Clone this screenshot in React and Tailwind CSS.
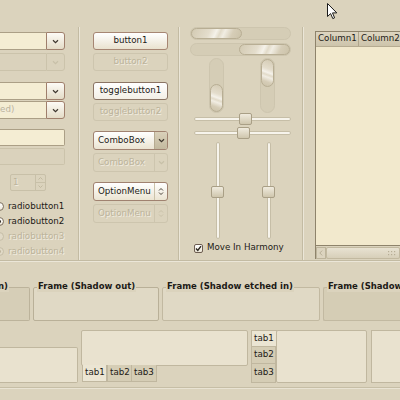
import React from "react";

const dis = "text-[#bbb39b] [text-shadow:1px_1px_0_#f1ece0]";

function Chevron({ color = "#3d362e" }) {
  return (
    <svg width="7" height="5" viewBox="0 0 7 5">
      <path d="M1 1.2 L3.5 3.6 L6 1.2" fill="none" stroke={color} strokeWidth="1.2" />
    </svg>
  );
}

function UpDown({ color = "#3d362e" }) {
  return (
    <svg width="6" height="9" viewBox="0 0 6 9">
      <path d="M1 3.5 L3 1.5 L5 3.5 M1 5.5 L3 7.5 L5 5.5" fill="none" stroke={color} strokeWidth="1" />
    </svg>
  );
}

function ComboEntry({ disabled, children }) {
  return (
    <div className="flex h-[18px] w-[65px]">
      <div
        className={
          "flex-1 overflow-hidden border-y flex items-center " +
          (disabled ? "border-[#cbc3ab] bg-[#dad2bc]" : "border-[#ab9f86] bg-[#f4edd3]")
        }
      >
        {children}
      </div>
      <div
        className={
          "w-[19px] rounded-r-[3px] border flex items-center justify-center " +
          (disabled
            ? "border-[#cbc3ab] bg-[#dad2bc]"
            : "border-[#9f7f6c] bg-gradient-to-b from-[#fdfbf6] to-[#e4dcc7]")
        }
      >
        <Chevron color={disabled ? "#c8c0a8" : "#3d362e"} />
      </div>
    </div>
  );
}

function Button({ children, disabled, toggled }) {
  return (
    <div
      className={
        "w-[75px] h-[18px] rounded-[3px] border flex items-center justify-center text-[8.7px] " +
        (disabled
          ? "border-[#cdc5ae] bg-[#dbd3bd] " + dis
          : toggled
          ? "border-[#8a7464] bg-gradient-to-b from-white to-[#f3efe6] text-[#1c1a16]"
          : "border-[#a68673] bg-gradient-to-b from-white to-[#e9e2cf] text-[#1c1a16]")
      }
    >
      {children}
    </div>
  );
}

function Combo({ children, disabled, option }) {
  return (
    <div
      className={
        "w-[75px] h-[19px] rounded-[3px] border flex text-[8.7px] overflow-hidden " +
        (disabled ? "border-[#cdc5ae] bg-[#dbd3bd]" : "border-[#a08270] bg-gradient-to-b from-white to-[#ebe4d2]")
      }
    >
      <div className={"flex-1 flex items-center pl-[4px] " + (disabled ? dis : "text-[#1c1a16]")}>{children}</div>
      <div
        className={
          "w-[13px] flex items-center justify-center border-l " +
          (disabled
            ? "border-[#cdc5ae]"
            : option
            ? "border-[#cbc2aa]"
            : "border-[#b6ab91] bg-gradient-to-b from-[#d9d0b9] to-[#c3b99f]")
        }
      >
        {option ? (
          <UpDown color={disabled ? "#c8c0a8" : "#4a4238"} />
        ) : (
          <Chevron color={disabled ? "#c8c0a8" : "#3d362e"} />
        )}
      </div>
    </div>
  );
}

function Radio({ checked, disabled, label }) {
  return (
    <div className="flex items-center h-[15px]">
      <div
        className={
          "ml-[-5px] w-[9px] h-[9px] rounded-full border flex items-center justify-center " +
          (disabled ? "border-[#c6bea7] bg-[#e0d9c6]" : "border-[#7d7060] bg-gradient-to-b from-white to-[#ece6d6]")
        }
      >
        {checked && <div className={"w-[3px] h-[3px] rounded-full " + (disabled ? "bg-[#bbb39b]" : "bg-[#2b2620]")} />}
      </div>
      <div className={"ml-[4px] text-[8.7px] leading-[15px] " + (disabled ? dis : "text-[#1c1a16]")}>{label}</div>
    </div>
  );
}

const thumbH =
  "bg-[linear-gradient(115deg,#d3cab3_0%,#e4ddcc_35%,#f5f2ea_48%,#e2dbc9_56%,#f1ede3_64%,#d6cdb7_80%,#cbc2a9_100%)]";
const thumbV =
  "bg-[linear-gradient(200deg,#d3cab3_0%,#e4ddcc_35%,#f5f2ea_48%,#e2dbc9_56%,#f1ede3_64%,#d6cdb7_80%,#cbc2a9_100%)]";

function HScroll({ right }) {
  return (
    <div className={"w-[101px] h-[13px] rounded-full bg-[#d5cdb6] border border-[#cdc5ae] flex " + (right ? "justify-end" : "justify-start")}>
      <div className={"w-[51px] h-full rounded-full border border-[#b8ae94] " + thumbH} />
    </div>
  );
}

function VScroll({ bottom }) {
  return (
    <div className={"w-[15px] h-[55px] rounded-full bg-[#d5cdb6] border border-[#cdc5ae] flex flex-col " + (bottom ? "justify-end" : "justify-start")}>
      <div className={"h-[28px] w-full rounded-full border border-[#b8ae94] " + thumbV} />
    </div>
  );
}

const handle =
  "w-[13px] h-[12px] rounded-[2px] border border-[#a99f86] bg-gradient-to-b from-[#f0ebde] to-[#cfc6ad]";

function HSlider({ pos }) {
  return (
    <div className="relative w-[97px] h-[12px] ml-[4px] flex items-center">
      <div className="w-full h-[4px] rounded-full bg-[#f7f4ec] border border-[#c6bea7]" />
      <div className={"absolute top-0 " + handle} style={{ left: pos }} />
    </div>
  );
}

function VSlider() {
  return (
    <div className="relative w-[13px] h-[97px] flex justify-center">
      <div className="h-full w-[4px] rounded-full bg-[#f7f4ec] border border-[#c6bea7]" />
      <div className={"absolute left-0 top-[44px] " + handle} />
    </div>
  );
}

function Frame({ label, className, labelClass = "left-[3px]" }) {
  return (
    <div className={"relative h-[34px] rounded-[2px] border " + className}>
      <div className={"absolute top-[-7px] whitespace-nowrap px-[1px] bg-[#dbd3bd] text-[8.5px] leading-[11px] font-bold text-[#1c1a16] " + labelClass}>
        {label}
      </div>
    </div>
  );
}

function Tab({ children, active, className = "" }) {
  return (
    <div
      className={
        "flex items-center text-[8.7px] text-[#1c1a16] px-[2px] " +
        (active ? "bg-[#ebe5d3] " : "bg-[#d5cdb5] border border-[#c0b79f] ") +
        className
      }
    >
      {children}
    </div>
  );
}

const vsep = "mt-[27px] h-[233px] w-[2px] border-l border-[#c3bba3] bg-[#ebe6d8]";

export default function App() {
  return (
    <div className="relative w-[400px] h-[400px] overflow-hidden bg-[#dbd3bd] text-[#1c1a16] font-['DejaVu_Sans',sans-serif]">
      {/* top section */}
      <div className="flex h-[260px]">
        {/* col1 */}
        <div className="w-[78px] shrink-0 flex flex-col">
          <div className="mt-[32px]">
            <ComboEntry />
          </div>
          <div className="mt-[3px]">
            <ComboEntry disabled />
          </div>
          <div className="mt-[11px]">
            <ComboEntry />
          </div>
          <div className="mt-[1px]">
            <ComboEntry>
              <span className={"ml-[-29px] text-[8.7px] whitespace-nowrap " + dis}>(disabled)</span>
            </ComboEntry>
          </div>
          <div className="mt-[10px] w-[65px] h-[17px] border-y border-r rounded-r-[2px] border-[#ab9f86] bg-[#f4edd3]" />
          <div className="mt-[2px] w-[65px] h-[17px] border-y border-r rounded-r-[2px] border-[#cbc3ab] bg-[#dad2bc]" />
          <div className="mt-[9px] ml-[10px] w-[36px] h-[17px] flex border border-[#c8c0a8] rounded-[2px]">
            <div className={"flex-1 flex items-center pl-[2px] text-[8.7px] " + dis}>1</div>
            <div className="w-[10px] border-l border-[#c8c0a8] flex flex-col">
              <div className="flex-1 flex items-center justify-center border-b border-[#c8c0a8]">
                <svg width="5" height="3" viewBox="0 0 5 3"><path d="M0.5 2.5 L2.5 0.5 L4.5 2.5" fill="none" stroke="#bdb59d" strokeWidth="0.9" /></svg>
              </div>
              <div className="flex-1 flex items-center justify-center">
                <svg width="5" height="3" viewBox="0 0 5 3"><path d="M0.5 0.5 L2.5 2.5 L4.5 0.5" fill="none" stroke="#bdb59d" strokeWidth="0.9" /></svg>
              </div>
            </div>
          </div>
          <div className="mt-[8px] flex flex-col">
            <Radio label="radiobutton1" />
            <Radio label="radiobutton2" checked />
            <Radio label="radiobutton3" disabled />
            <Radio label="radiobutton4" disabled checked />
          </div>
        </div>
        <div className={vsep} />
        {/* col2 */}
        <div className="w-[98px] shrink-0 pl-[13px] flex flex-col">
          <div className="mt-[32px]"><Button>button1</Button></div>
          <div className="mt-[3px]"><Button disabled>button2</Button></div>
          <div className="mt-[11px]"><Button toggled>togglebutton1</Button></div>
          <div className="mt-[3px]"><Button disabled>togglebutton2</Button></div>
          <div className="mt-[10px]"><Combo>ComboBox</Combo></div>
          <div className="mt-[3px]"><Combo disabled>ComboBox</Combo></div>
          <div className="mt-[10px]"><Combo option>OptionMenu</Combo></div>
          <div className="mt-[3px]"><Combo option disabled>OptionMenu</Combo></div>
        </div>
        <div className={vsep} />
        {/* col3 */}
        <div className="w-[122px] shrink-0 pl-[10px] flex flex-col">
          <div className="mt-[27px]"><HScroll /></div>
          <div className="mt-[3px]"><HScroll right /></div>
          <div className="mt-[2px] flex pl-[19px] gap-[36px]">
            <VScroll bottom />
            <VScroll />
          </div>
          <div className="mt-[0px]"><HSlider pos={45} /></div>
          <div className="mt-[2px]"><HSlider pos={43} /></div>
          <div className="mt-[3px] flex pl-[21px] gap-[38px]">
            <VSlider />
            <VSlider />
          </div>
          <div className="mt-[3px] flex items-center h-[12px] pl-[4px]">
            <div className="w-[9px] h-[9px] rounded-[2px] border border-[#6e5e52] bg-gradient-to-b from-white to-[#ece6d6] flex items-center justify-center">
              <svg width="7" height="7" viewBox="0 0 7 7"><path d="M1 3.6 L2.8 5.4 L6 1.2" fill="none" stroke="#2b2620" strokeWidth="1.4" /></svg>
            </div>
            <span className="ml-[4px] text-[8.7px]">Move In Harmony</span>
          </div>
        </div>
        <div className={vsep} />
        {/* col4 */}
        <div className="flex-1 pl-[11px] flex flex-col">
          <div className="mt-[31px] h-[228px] border-l border-t border-[#8e836b] flex flex-col">
            <div className="h-[15px] flex bg-gradient-to-b from-[#ddd5c0] to-[#cdc4ab] border-b border-[#b5ab91] text-[8.7px]">
              <div className="w-[43px] pl-[2px] flex items-center border-r border-[#b0a68c]">Column1</div>
              <div className="pl-[2px] flex items-center whitespace-nowrap">Column2</div>
            </div>
            <div className="flex-1 bg-[#f2e9cd] border-b border-[#8e836b]" />
            <div className="h-[12px] flex bg-[#d6ceb7] mt-[1px]">
              <div className="w-[10px] border border-[#bdb49b] bg-[#dcd4bf] flex items-center justify-center">
                <svg width="4" height="6" viewBox="0 0 4 6"><path d="M3.2 0.6 L0.8 3 L3.2 5.4" fill="none" stroke="#b3aa92" strokeWidth="0.9" /></svg>
              </div>
              <div className="flex-1 rounded-[2px] border border-[#c2b9a0] bg-gradient-to-b from-[#e8e2d2] to-[#d7cfb9] flex items-center justify-end pr-[3px]">
                <svg width="8" height="5" viewBox="0 0 8 5">
                  <rect x="0" y="0" width="1.2" height="1.2" fill="#b7ae96" />
                  <rect x="3" y="0" width="1.2" height="1.2" fill="#b7ae96" />
                  <rect x="6" y="0" width="1.2" height="1.2" fill="#b7ae96" />
                  <rect x="0" y="3" width="1.2" height="1.2" fill="#b7ae96" />
                  <rect x="3" y="3" width="1.2" height="1.2" fill="#b7ae96" />
                  <rect x="6" y="3" width="1.2" height="1.2" fill="#b7ae96" />
                </svg>
              </div>
            </div>
          </div>
        </div>
      </div>
      {/* horizontal separator under top section */}
      <div className="h-[2px] border-t border-[#c3bba3] bg-[#ebe6d8]" />

      {/* frames */}
      <div className="flex mt-[25px] gap-[3px]">
        <Frame label="Frame (Shadow in)" labelClass="right-[20px]" className="w-[30px] shrink-0 border-l-0 rounded-l-none border-[#bcb39b] bg-[#d6ceb7]" />
        <Frame label="Frame (Shadow out)" className="w-[126px] shrink-0 border-[#b9b098] bg-[#e0d9c5]" />
        <Frame label="Frame (Shadow etched in)" className="w-[158px] shrink-0 border-[#c2b9a1] bg-[#e0d9c5]" />
        <Frame label="Frame (Shadow etched out)" className="w-[90px] shrink-0 border-r-0 border-[#c2b9a1] bg-[#d5cdb5]" />
      </div>

      {/* notebooks */}
      <div className="flex mt-[9px] h-[53px]">
        <div className="w-[78px] shrink-0 mt-[17px] h-[36px] border border-l-0 border-[#c0b79f] bg-[#e9e2cf] rounded-r-[2px]" />
        <div className="ml-[3px] w-[167px] shrink-0 flex flex-col">
          <div className="h-[36px] border border-[#c0b79f] bg-[#e9e2cf] rounded-[2px]" />
          <div className="flex h-[17px] ml-[1px] mt-[-1px]">
            <Tab active className="w-[25px] border-x border-b border-[#c0b79f]">tab1</Tab>
            <Tab className="w-[25px] border-t-0">tab2</Tab>
            <Tab className="w-[25px] border-t-0 border-l-0">tab3</Tab>
          </div>
        </div>
        <div className="ml-[3px] flex shrink-0">
          <div className="flex flex-col w-[25px]">
            <Tab active className="h-[17px] border-y border-l border-[#c0b79f] w-[26px]">tab1</Tab>
            <Tab className="h-[17px] border-t-0">tab2</Tab>
            <Tab className="h-[19px] border-t-0">tab3</Tab>
          </div>
          <div className="w-[91px] h-[53px] border border-[#c0b79f] bg-[#e9e2cf] rounded-[2px]" />
        </div>
        <div className="ml-[4px] flex-1 h-[53px] border border-r-0 border-[#c0b79f] bg-[#e9e2cf]" />
      </div>

      {/* bottom separator */}
      <div className="mt-[4px] h-[2px] border-t border-[#c6bea6] bg-[#e9e3d3]" />

      {/* mouse cursor */}
      <svg className="absolute left-[327px] top-[3px]" width="11" height="17" viewBox="0 0 11 17">
        <path d="M0.5 0.5 L0.5 13.5 L3.6 10.6 L5.8 15.6 L7.6 14.8 L5.5 9.9 L9.8 9.9 Z" fill="#ffffff" stroke="#1a1a1a" strokeWidth="1" strokeLinejoin="round" />
      </svg>
    </div>
  );
}
